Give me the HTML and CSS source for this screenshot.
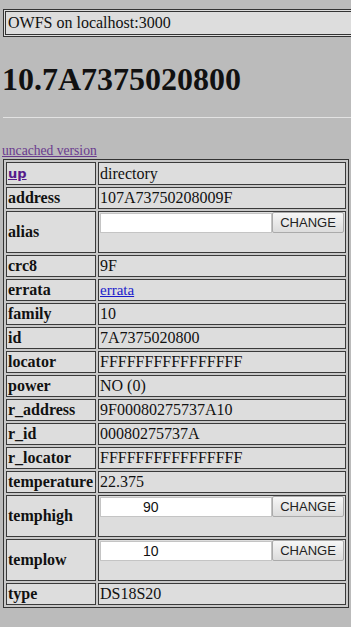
FILE: index.html
```html
<!DOCTYPE html>
<html>
<head>
  <title>OWFS on localhost:3000</title>
  <link rel="stylesheet" href="styles.css">
</head>
<body>
  <div class="page">
    <div class="topbar">OWFS on localhost:3000</div>
    <h1>10.7A7375020800</h1>
    <hr>
    <a class="uncached" href="#">uncached version</a>
    <table class="props">
      <tr><td class="up"><a href="#">up</a></td><td>directory</td></tr>
      <tr><td>address</td><td>107A73750208009F</td></tr>
      <tr><td>alias</td><td><form><input type="text" value=""><input type="submit" value="CHANGE"></form></td></tr>
      <tr><td>crc8</td><td>9F</td></tr>
      <tr><td>errata</td><td><a class="dir" href="#">errata</a></td></tr>
      <tr><td>family</td><td>10</td></tr>
      <tr><td>id</td><td>7A7375020800</td></tr>
      <tr><td>locator</td><td>FFFFFFFFFFFFFFFF</td></tr>
      <tr><td>power</td><td>NO (0)</td></tr>
      <tr><td>r_address</td><td>9F00080275737A10</td></tr>
      <tr><td>r_id</td><td>00080275737A</td></tr>
      <tr><td>r_locator</td><td>FFFFFFFFFFFFFFFF</td></tr>
      <tr><td>temperature</td><td>22.375</td></tr>
      <tr><td>temphigh</td><td><form><input class="num" type="text" value="90"><input type="submit" value="CHANGE"></form></td></tr>
      <tr><td>templow</td><td><form><input class="num" type="text" value="10"><input type="submit" value="CHANGE"></form></td></tr>
      <tr><td>type</td><td>DS18S20</td></tr>
    </table>
  </div>
</body>
</html>
```

FILE: styles.css
```css
html, body {
  margin: 0;
  padding: 0;
  background-color: #fff;
}

.page {
  width: 351px;
  height: 627px;
  overflow: hidden;
  background-color: #bbbbbb;
  font-family: "Liberation Serif", "Times New Roman", serif;
  font-size: 16px;
  color: #111;
  padding-top: 9px;
  box-sizing: border-box;
}

.topbar {
  margin-left: 3px;
  width: 380px;
  border: 3px double #333;
  background-color: #dddddd;
  padding: 1px 2px;
  height: 20px;
  line-height: 20px;
}

h1 {
  font-size: 32px;
  margin: 22px 0 0 2px;
  line-height: 40px;
}

hr {
  margin: 18px 0 0 3px;
  border: none;
  border-top: 1px solid #e2e2e2;
  height: 0;
}

.uncached {
  display: block;
  margin: 25px 0 0 2px;
  font-size: 13.6px;
  line-height: 16px;
  color: #6a3a8e;
}

.props {
  margin-left: 3px;
  width: 346px;
  border: 1px solid #333;
  border-collapse: separate;
  border-spacing: 2px;
  background-color: #c8c8c8;
  table-layout: fixed;
}

.props td {
  background-color: #dddddd;
  border: 1px solid #3a3a3a;
  height: 20px;
  padding: 0 1px;
  line-height: 20px;
  white-space: nowrap;
}

.props td:first-child {
  font-weight: bold;
  width: 86px;
}

.props td.up a {
  font-family: "DejaVu Sans", Verdana, sans-serif;
  font-size: 13px;
  color: #551a8b;
}

.dir {
  color: #1a1acc;
  font-size: 15px;
}

.props form {
  margin: 1px 0 19px 0;
  display: flex;
}

.props input[type=text] {
  width: 172px;
  height: 20px;
  border: 1px solid #c4c4c4;
  padding: 0 2px;
  box-sizing: border-box;
  font-family: "Liberation Sans", Arial, sans-serif;
  font-size: 14px;
  color: #111;
  background: #fff;
  margin: 0;
}

.props input.num {
  padding-left: 42px;
}

.props input[type=submit] {
  width: 73px;
  height: 21px;
  border: 1px solid #aaa;
  border-radius: 2px;
  background: linear-gradient(#f6f6f6, #dcdcdc);
  font-family: "Liberation Sans", Arial, sans-serif;
  font-size: 13px;
  color: #222;
  padding: 0;
  margin: -1px 0 0 0;
}
```
